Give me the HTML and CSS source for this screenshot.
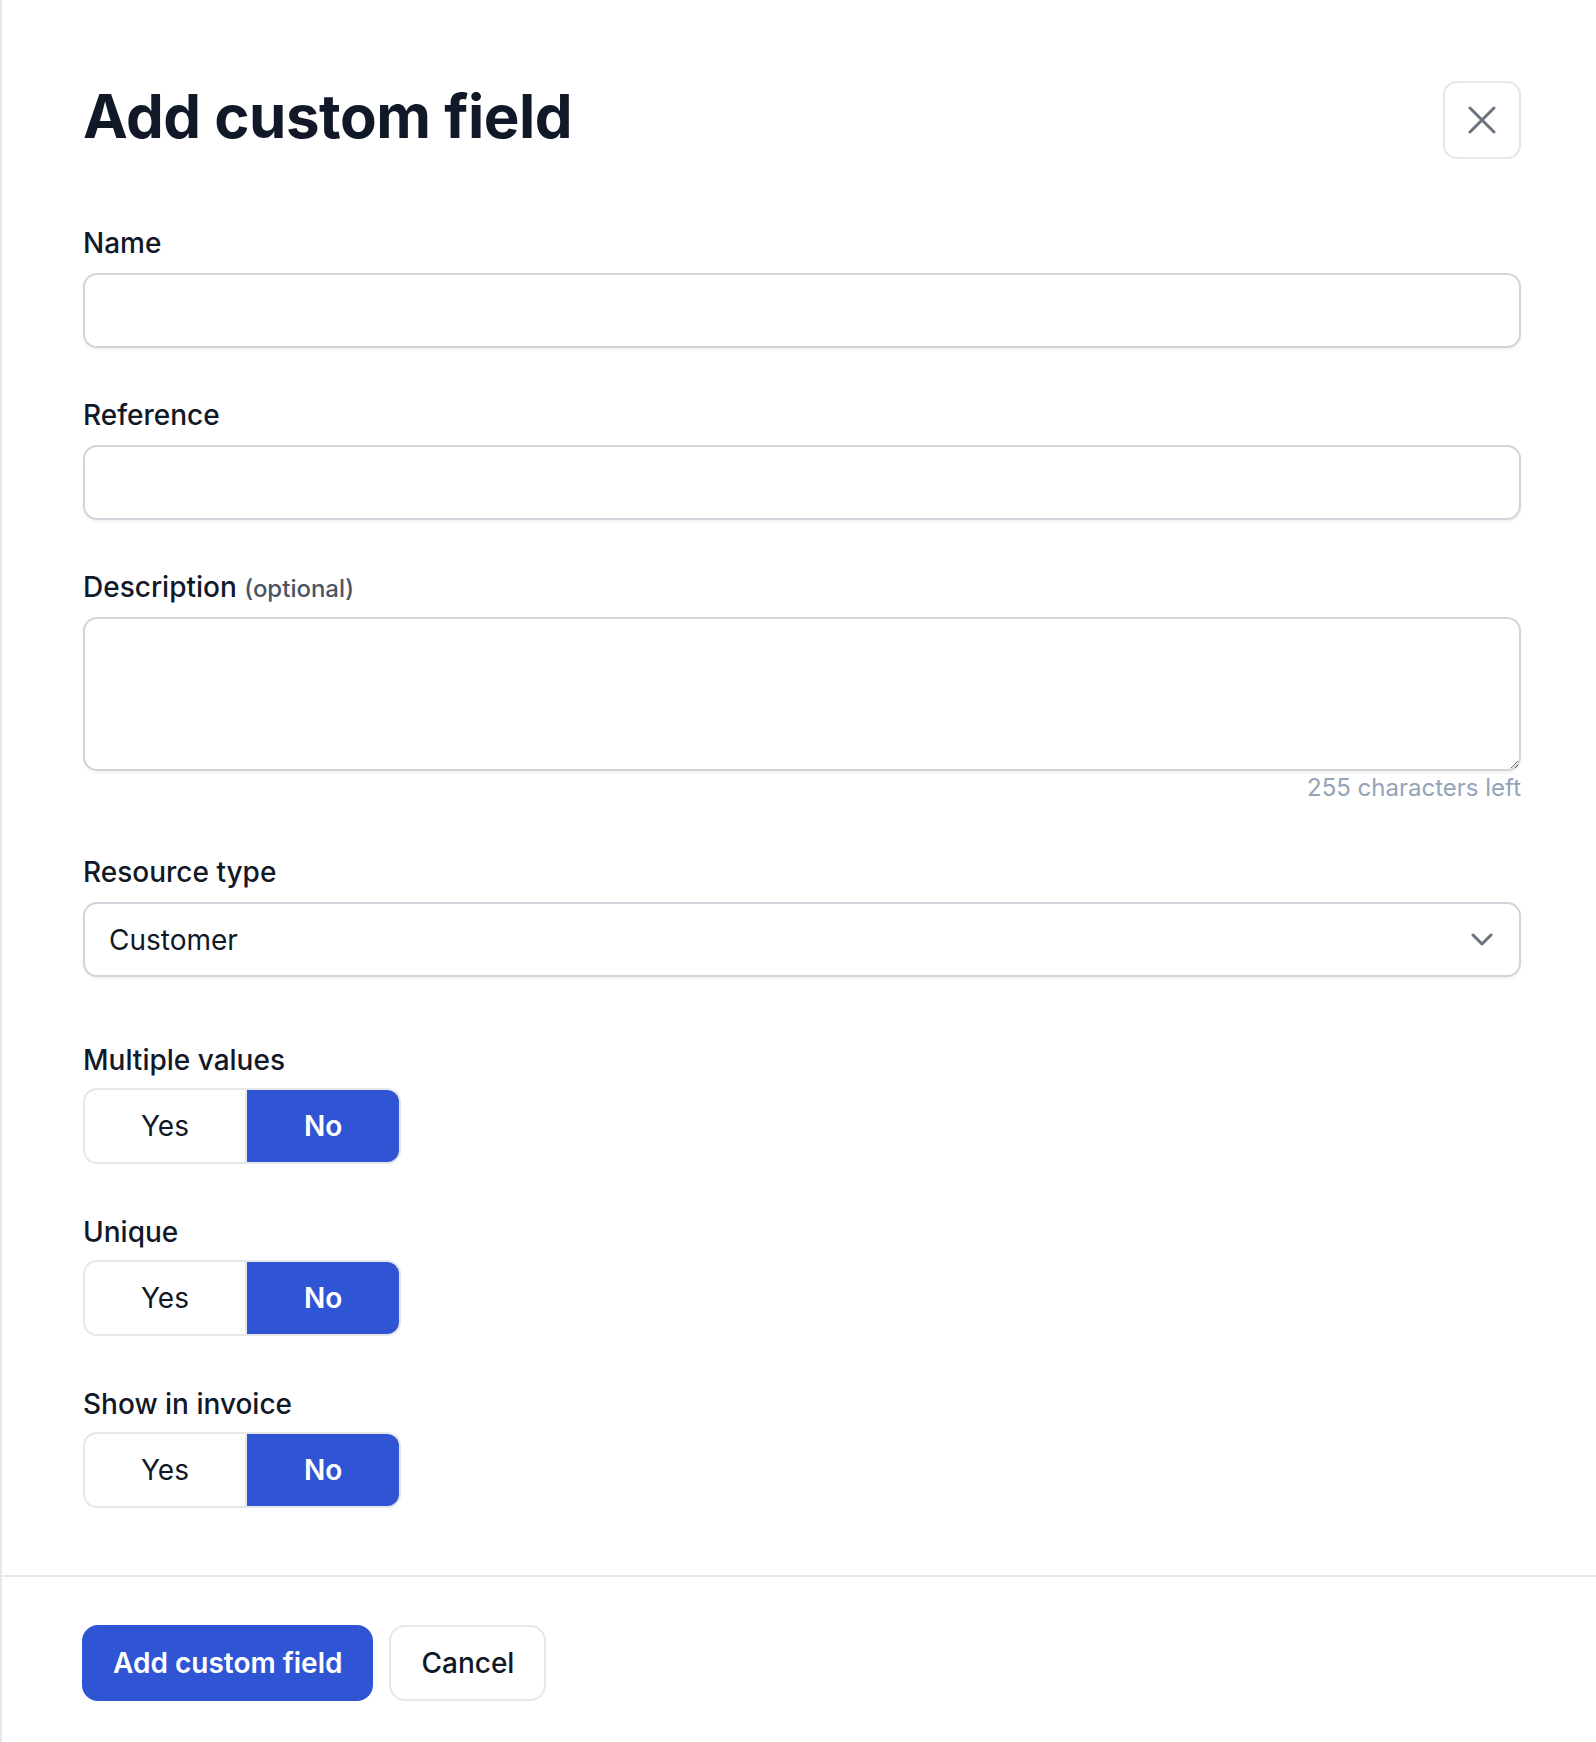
FILE: index.html
```html
<!DOCTYPE html>
<html lang="en">
<head>
<meta charset="utf-8">
<title>Add custom field</title>
<link rel="stylesheet" href="styles.css">
</head>
<body>
<div class="panel">
  <div class="body">
    <div class="header">
      <h1 class="title">Add custom field</h1>
      <button class="close" type="button" aria-label="Close">
        <svg width="28" height="28" viewBox="0 0 28 28" fill="none" stroke="#6b7280" stroke-width="3" stroke-linecap="round"><path d="M2 2L26 26M26 2L2 26"/></svg>
      </button>
    </div>

    <div class="field">
      <label class="label">Name</label>
      <input class="input" type="text">
    </div>

    <div class="field">
      <label class="label">Reference</label>
      <input class="input" type="text">
    </div>

    <div class="field">
      <label class="label">Description <span class="optional">(optional)</span></label>
      <textarea class="textarea"></textarea>
      <div class="counter">255 characters left</div>
    </div>

    <div class="field field-select">
      <label class="label">Resource type</label>
      <div class="select">
        <span class="select-value">Customer</span>
        <svg class="chevron" width="22" height="13" viewBox="0 0 22 13" fill="none" stroke="#6b7280" stroke-width="3" stroke-linecap="round" stroke-linejoin="round"><path d="M2 2L11 11L20 2"/></svg>
      </div>
    </div>

    <div class="field field-toggle">
      <label class="label">Multiple values</label>
      <div class="toggle">
        <span class="opt">Yes</span>
        <span class="opt active">No</span>
      </div>
    </div>

    <div class="field field-toggle">
      <label class="label">Unique</label>
      <div class="toggle">
        <span class="opt">Yes</span>
        <span class="opt active">No</span>
      </div>
    </div>

    <div class="field field-toggle">
      <label class="label">Show in invoice</label>
      <div class="toggle">
        <span class="opt">Yes</span>
        <span class="opt active">No</span>
      </div>
    </div>
  </div>

  <div class="footer">
    <button class="btn btn-primary" type="button">Add custom field</button>
    <button class="btn btn-secondary" type="button">Cancel</button>
  </div>
</div>
</body>
</html>
```

FILE: styles.css
```css
* {
  box-sizing: border-box;
}

html, body {
  margin: 0;
  padding: 0;
  background: #ffffff;
}

body {
  font-family: Inter, "Noto Sans", "Liberation Sans", sans-serif;
  color: #111827;
}

.panel {
  min-height: 1742px;
  border-left: 2px solid #e5e7eb;
}

.body {
  padding: 81px 75px 67px 81px;
}

.header {
  display: flex;
  align-items: flex-start;
  justify-content: space-between;
  margin-bottom: 64px;
}

.title {
  margin: 0;
  font-size: 60px;
  font-weight: 700;
  line-height: 70px;
  letter-spacing: -0.5px;
  color: #111827;
}

.close {
  width: 78px;
  height: 78px;
  border: 2px solid #e5e7eb;
  border-radius: 14px;
  background: #fff;
  display: flex;
  align-items: center;
  justify-content: center;
  padding: 0;
}

.field {
  display: flex;
  flex-direction: column;
  margin-bottom: 47px;
}

.field-toggle {
  margin-bottom: 46px;
}

.field:last-child {
  margin-bottom: 0;
}

.label {
  display: block;
  height: 40px;
  font-size: 28px;
  font-weight: 500;
  line-height: 40px;
  margin-bottom: 10px;
  color: #111827;
}

.field-toggle .label {
  margin-top: 2px;
  margin-bottom: 8px;
}

.optional {
  font-size: 24px;
  font-weight: 500;
  line-height: 1;
  color: #4b5563;
}

.input {
  height: 75px;
  border: 2px solid #d1d5db;
  border-radius: 14px;
  background: #fff;
  box-shadow: 0 2px 3px rgba(0, 0, 0, 0.05);
  font: inherit;
  font-size: 28px;
  padding: 0 24px;
  outline: none;
}

.textarea {
  height: 154px;
  border: 2px solid #d1d5db;
  border-radius: 14px;
  background: #fff;
  box-shadow: 0 2px 3px rgba(0, 0, 0, 0.05);
  font: inherit;
  font-size: 28px;
  padding: 16px 24px;
  resize: vertical;
  outline: none;
  display: block;
}

.counter {
  align-self: flex-end;
  font-size: 24px;
  line-height: 30px;
  margin-top: 2px;
  margin-bottom: 2px;
  color: #94a3b8;
}

.field-select {
  margin-bottom: 61px;
}

.select {
  height: 75px;
  border: 2px solid #d1d5db;
  border-radius: 14px;
  background: #fff;
  box-shadow: 0 2px 3px rgba(0, 0, 0, 0.05);
  display: flex;
  align-items: center;
  justify-content: space-between;
  padding: 0 26px 0 24px;
}

.select-value {
  font-size: 28px;
  line-height: 40px;
  color: #111827;
}

.toggle {
  display: inline-flex;
  align-self: flex-start;
  border: 2px solid #e5e7eb;
  border-radius: 14px;
  overflow: hidden;
  background: #fff;
}

.opt {
  font-size: 28px;
  line-height: 40px;
  padding: 16px 56px;
  color: #111827;
}

.opt.active {
  background: #2f55d4;
  color: #ffffff;
  font-weight: 600;
  padding: 16px 57px;
  border-left: 2px solid #e5e7eb;
}

.footer {
  border-top: 2px solid #e5e7eb;
  padding: 48px 75px 40px 80px;
  display: flex;
  gap: 16px;
}

.btn {
  height: 76px;
  border-radius: 16px;
  font-family: inherit;
  font-size: 28px;
  font-weight: 600;
  line-height: 40px;
  padding: 0 32px;
  cursor: pointer;
}

.btn-primary {
  background: #2f55d4;
  border: 2px solid #2f55d4;
  color: #ffffff;
  padding: 0 29px;
}

.btn-secondary {
  background: #ffffff;
  border: 2px solid #e5e7eb;
  color: #111827;
  font-weight: 500;
  padding: 0 30px;
}
```
